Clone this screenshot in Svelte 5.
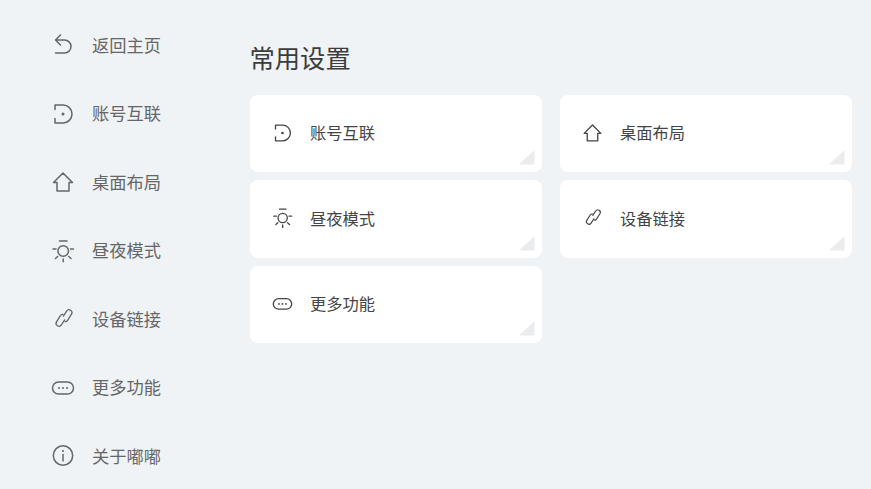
<script>
    const menu = [
        { name: '返回主页', icon: 'back' },
        { name: '账号互联', icon: 'account' },
        { name: '桌面布局', icon: 'home' },
        { name: '昼夜模式', icon: 'sun' },
        { name: '设备链接', icon: 'link' },
        { name: '更多功能', icon: 'more' },
        { name: '关于嘟嘟', icon: 'info' },
    ]

    const cards = [
        { name: '账号互联', icon: 'account' },
        { name: '桌面布局', icon: 'home' },
        { name: '昼夜模式', icon: 'sun' },
        { name: '设备链接', icon: 'link' },
        { name: '更多功能', icon: 'more' },
    ]
</script>

{#snippet icon(type)}
    <svg viewBox="0 0 24 24" fill="none" stroke="currentColor" stroke-width="1.5" stroke-linecap="round" stroke-linejoin="round">
        {#if type === 'back'}
            <path d="M9.5 2.5L4.5 7.5L9.5 12.5M4.5 7.5H13.5a6.5 6.5 0 0 1 0 13H4.5" />
        {:else if type === 'account'}
            <path d="M4 8V3.5H12a9 9 0 0 1 0 18H4V17" />
            <circle cx="12" cy="12.5" r="1.5" fill="currentColor" stroke="none" />
        {:else if type === 'home'}
            <path d="M12 3.5L21.5 13H18V21.5H6V13H2.5Z" />
        {:else if type === 'sun'}
            <circle cx="12.2" cy="12.5" r="5.3" />
            <path d="M8.5 2.5H16M2 10.5H5M19.5 10.5H22.5M12.2 20.5V23.5M4.5 20L6.6 18M20 20L17.8 18" />
        {:else if type === 'link'}
            <path d="M12.4 9.6L15.6 4.6a2.9 2.9 0 0 1 4.9 3.1L16.6 13.8a2.7 2.7 0 0 1-2.6 1.2" stroke-width="1.3" />
            <path d="M13.6 13.4L10.4 18.4a2.9 2.9 0 0 1-4.9-3.1L9.4 9.2a2.7 2.7 0 0 1 2.6-1.2" stroke-width="1.3" />
        {:else if type === 'more'}
            <rect x="1.5" y="6.5" width="21" height="12" rx="6" />
            <path d="M8 12.5h.01M12 12.5h.01M16 12.5h.01" stroke-width="2" />
        {:else if type === 'info'}
            <circle cx="12" cy="12" r="9.7" />
            <path d="M12 11V17.5" />
            <circle cx="12" cy="7.5" r="1.1" fill="currentColor" stroke="none" />
        {/if}
    </svg>
{/snippet}

<main>
    <nav class="sidebar">
        {#each menu as item (item.name)}
            <div class="menuItem">
                <span class="menuIcon">{@render icon(item.icon)}</span>
                <span>{item.name}</span>
            </div>
        {/each}
    </nav>

    <section class="content">
        <h1>常用设置</h1>
        <div class="cardGrid">
            {#each cards as card (card.name)}
                <div class="card">
                    <span class="cardIcon">{@render icon(card.icon)}</span>
                    <span>{card.name}</span>
                    <svg class="corner" viewBox="0 0 16 15">
                        <path d="M1 14L15 1V14Z" />
                    </svg>
                </div>
            {/each}
        </div>
    </section>
</main>

<style>
    :global(body) {
        background-color: #eff3f6;
    }

    main {
        display: flex;
        width: 871px;
        height: 489px;
        overflow: hidden;
        font-family: "Noto Sans CJK SC", "Noto Sans", sans-serif;
    }

    .sidebar {
        flex: none;
        width: 250px;
        box-sizing: border-box;
        padding: 10px 0 0 51px;
        color: #666;
    }

    .menuItem {
        display: flex;
        align-items: center;
        gap: 17px;
        height: 68.5px;
        font-size: 17.25px;
    }

    .menuIcon {
        display: flex;
        width: 24px;
        height: 24px;
        transform: translateY(0.5px);
    }

    .content {
        flex: 1;
        padding-right: 19px;
    }

    h1 {
        margin: 0 0 36.8px -0.5px;
        padding-top: 37px;
        height: 58px;
        box-sizing: border-box;
        font-size: 25.3px;
        line-height: 40px;
        font-weight: 400;
        color: #3c3c3c;
    }

    .cardGrid {
        display: grid;
        grid-template-columns: 292px 292px;
        grid-auto-rows: 77.5px;
        column-gap: 18px;
        row-gap: 8.1px;
    }

    .card {
        position: relative;
        display: flex;
        align-items: center;
        gap: 17px;
        padding: 0 0 2.5px 22px;
        background-color: #fff;
        border-radius: 8px;
        font-size: 16.25px;
        color: #444;
    }

    .cardIcon {
        display: flex;
        width: 21px;
        height: 21px;
    }

    .corner {
        position: absolute;
        right: 7px;
        bottom: 7px;
        width: 16px;
        height: 15px;
    }

    .corner path {
        fill: #ebecee;
        stroke: #ebecee;
        stroke-width: 1;
        stroke-linejoin: round;
    }
</style>
